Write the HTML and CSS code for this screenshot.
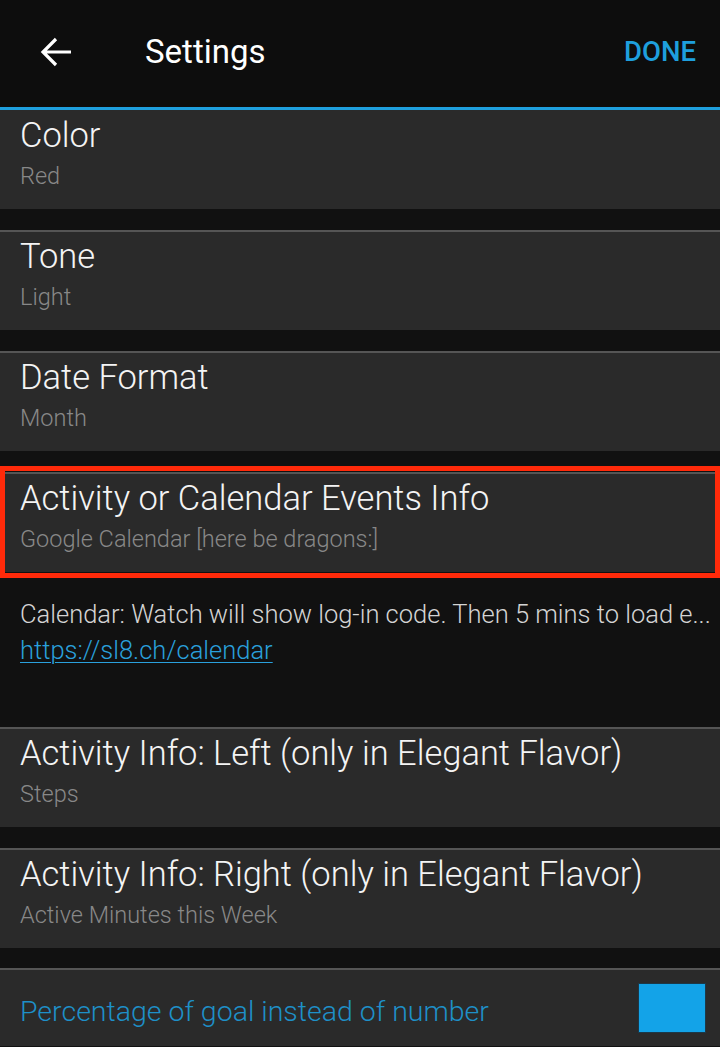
FILE: index.html
```html
<!DOCTYPE html>
<html lang="en">
<head>
  <meta charset="UTF-8">
  <meta name="viewport" content="width=device-width, initial-scale=1.0">
  <title>Settings</title>
  <link rel="stylesheet" href="styles.css">
</head>
<body>
  <header class="topbar">
    <a href="#" class="back" aria-label="Back">
      <svg width="32" height="30" viewBox="0 0 32 30"><path d="M31 15H3M16 2L3 15l13 13" fill="none" stroke="#fff" stroke-width="3.2"/></svg>
    </a>
    <h1 class="title">Settings</h1>
    <a href="#" class="done">DONE</a>
  </header>

  <main class="settings">
    <div class="row first">
      <div class="row-title">Color</div>
      <div class="row-value">Red</div>
    </div>
    <div class="row">
      <div class="row-title">Tone</div>
      <div class="row-value">Light</div>
    </div>
    <div class="row">
      <div class="row-title">Date Format</div>
      <div class="row-value">Month</div>
    </div>
    <div class="row marked">
      <div class="row-title">Activity or Calendar Events Info</div>
      <div class="row-value">Google Calendar [here be dragons:]</div>
      <span class="highlight"></span>
    </div>
    <div class="note">
      <p class="note-text">Calendar: Watch will show log-in code. Then 5 mins to load e...</p>
      <a href="#" class="note-link">https://sl8.ch/calendar</a>
    </div>
    <div class="row">
      <div class="row-title">Activity Info: Left (only in Elegant Flavor)</div>
      <div class="row-value">Steps</div>
    </div>
    <div class="row">
      <div class="row-title">Activity Info: Right (only in Elegant Flavor)</div>
      <div class="row-value">Active Minutes this Week</div>
    </div>
    <div class="row toggle-row">
      <span class="toggle-label">Percentage of goal instead of number</span>
      <span class="checkbox"></span>
    </div>
  </main>
</body>
</html>
```

FILE: styles.css
```css
* { margin: 0; padding: 0; box-sizing: border-box; }
body { background-color: #111; color: #f2f2f2; font-family: Roboto, "Noto Sans", sans-serif; }

.topbar { background-color: #0d0d0d; height: 110px; border-bottom: 3px solid #1e9fdd; display: flex; align-items: center; padding: 0 24px 4px 40px; }
.back { display: flex; width: 32px; height: 30px; }
.title { font-size: 33px; font-weight: 400; color: #fff; margin-left: 73px; flex: 1; }
.done { color: #1e9fdd; font-size: 27.5px; font-weight: 500; text-decoration: none; }

.settings { display: flex; flex-direction: column; }
.row { position: relative; background-color: #2a2a2a; border-top: 2px solid #555; padding: 2px 20px 17px; margin-top: 21px; }
.row.first { border-top: none; padding-top: 3px; margin-top: 0; }
.row-title { font-size: 34.5px; font-weight: 300; line-height: 44px; color: #f4f4f4; white-space: nowrap; }
.row-value { font-size: 23.5px; font-weight: 300; line-height: 32px; color: #888; margin-top: 3px; }

.highlight { position: absolute; top: -8px; bottom: -6px; left: 0; right: 0; border: 5px solid #ff2a0a; pointer-events: none; }

.note { padding: 24px 8px 38px 20px; font-size: 25.5px; font-weight: 300; line-height: 36px; }
.note-text { color: #d4d4d4; white-space: nowrap; }
.note-link { color: #2aa0dc; text-decoration: underline; text-underline-offset: 3px; text-decoration-thickness: 1px; }

.toggle-row { display: flex; align-items: center; justify-content: space-between; padding: 14px 15px 14px 20px; margin-top: 20px; }
.toggle-label { color: #1e90c8; font-size: 28.5px; font-weight: 300; margin-top: 6px; }
.checkbox { width: 66px; height: 48px; background-color: #13a3e8; box-shadow: 0 0 0 1px #1c3848; }
```
